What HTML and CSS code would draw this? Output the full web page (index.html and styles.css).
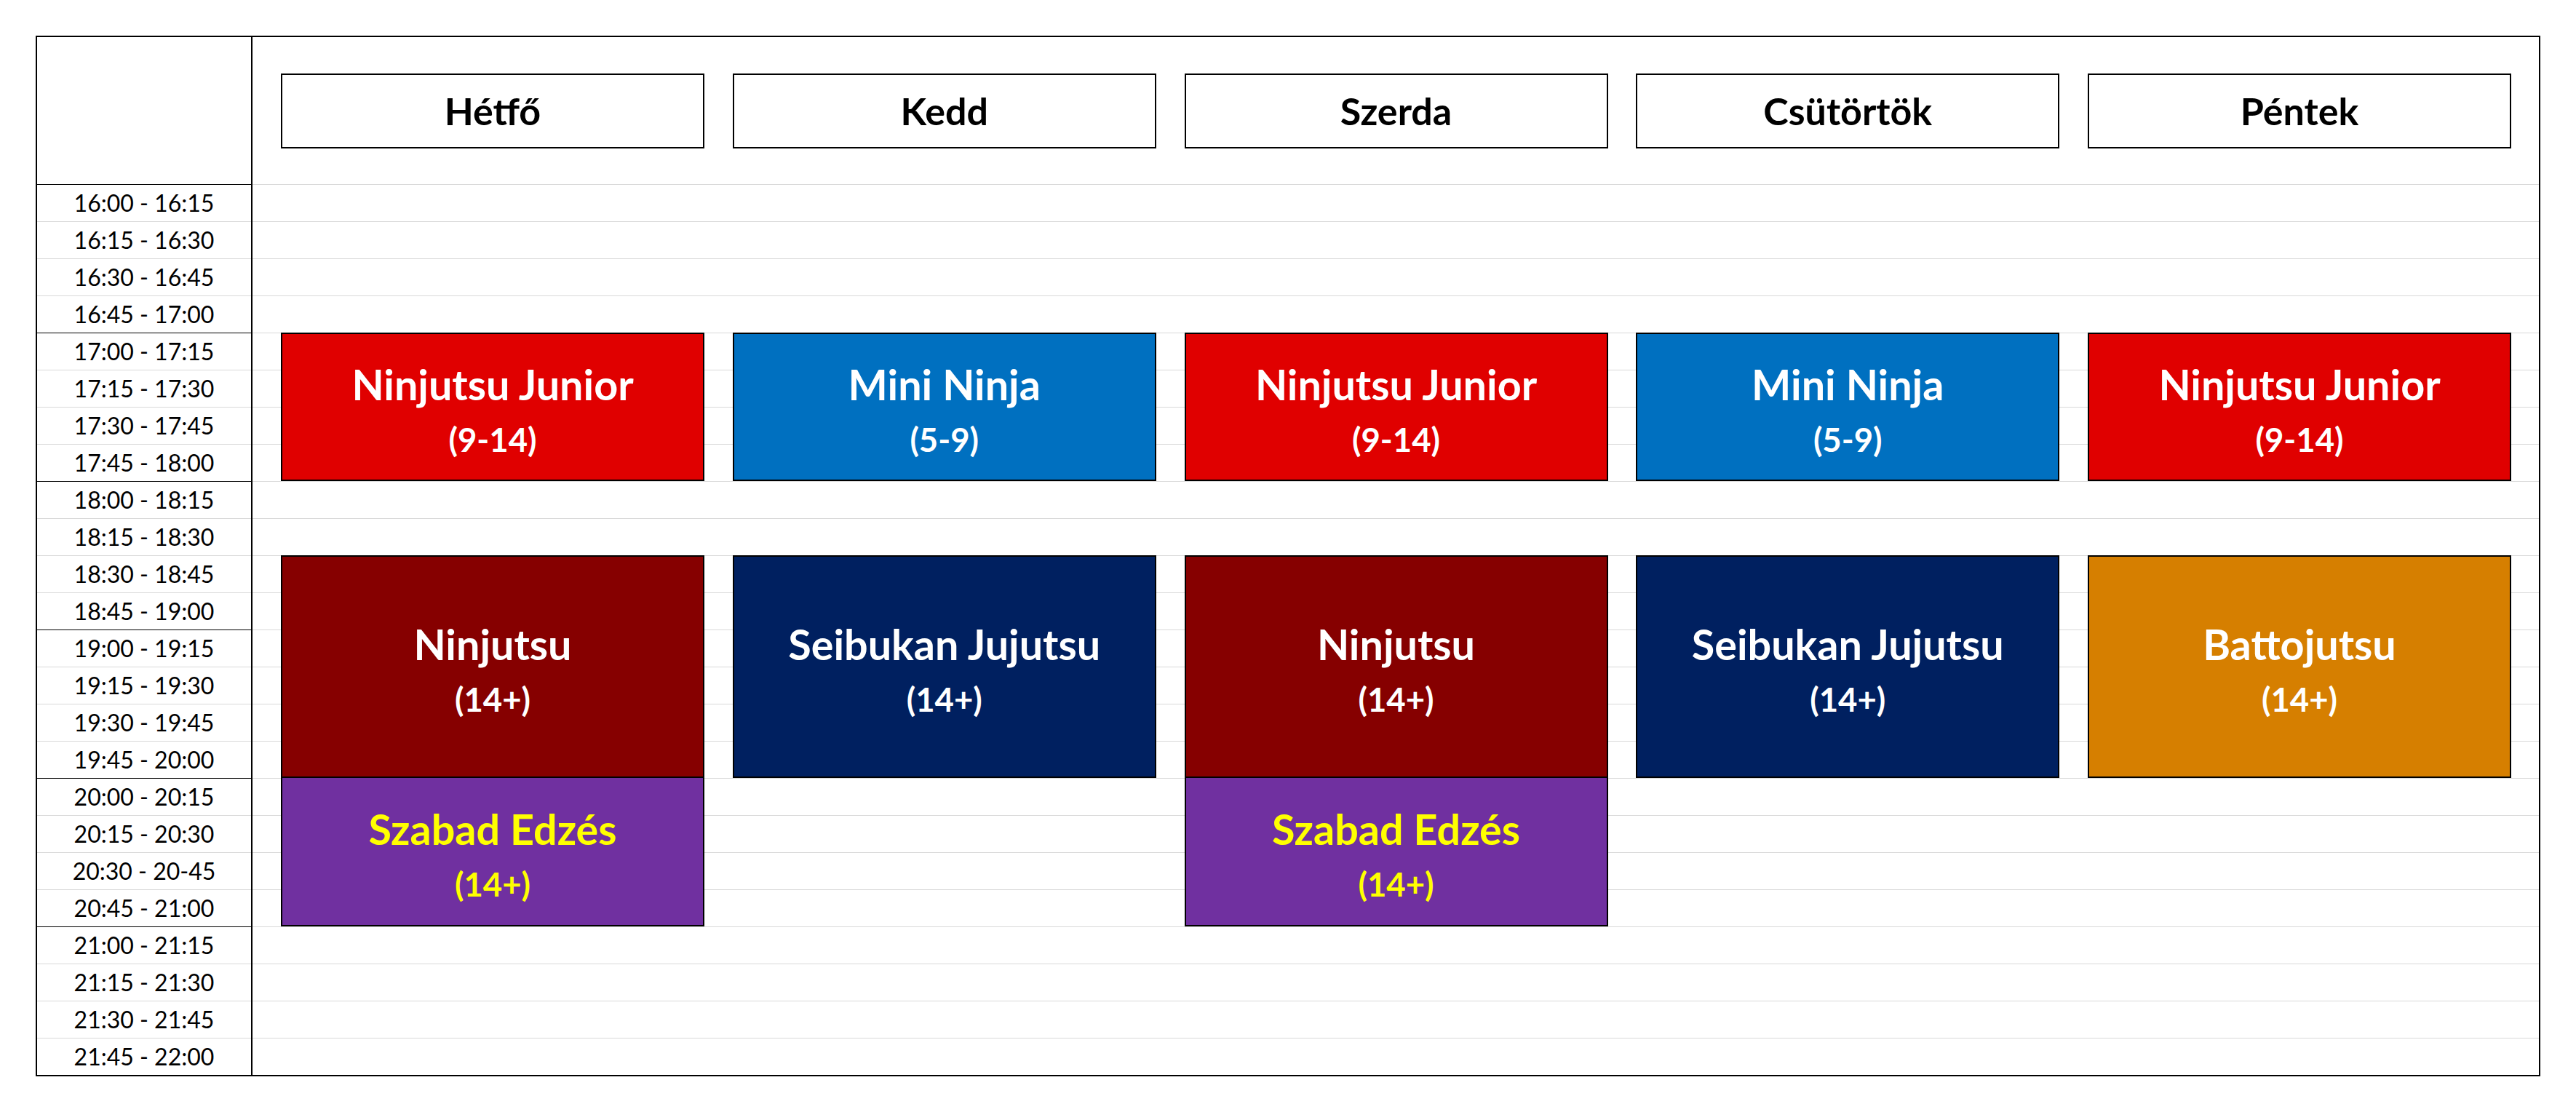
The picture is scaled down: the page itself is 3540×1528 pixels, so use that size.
FILE: index.html
```html
<!DOCTYPE html>
<html lang="hu">
<head>
<meta charset="utf-8">
<title>Órarend</title>
<link rel="stylesheet" href="styles.css">
</head>
<body>
<div class="sheet">
  <div class="times">
    <div class="time-head"></div>
    <div class="slot hour">16:00 - 16:15</div>
    <div class="slot">16:15 - 16:30</div>
    <div class="slot">16:30 - 16:45</div>
    <div class="slot">16:45 - 17:00</div>
    <div class="slot hour">17:00 - 17:15</div>
    <div class="slot">17:15 - 17:30</div>
    <div class="slot">17:30 - 17:45</div>
    <div class="slot">17:45 - 18:00</div>
    <div class="slot hour">18:00 - 18:15</div>
    <div class="slot">18:15 - 18:30</div>
    <div class="slot">18:30 - 18:45</div>
    <div class="slot">18:45 - 19:00</div>
    <div class="slot hour">19:00 - 19:15</div>
    <div class="slot">19:15 - 19:30</div>
    <div class="slot">19:30 - 19:45</div>
    <div class="slot">19:45 - 20:00</div>
    <div class="slot hour">20:00 - 20:15</div>
    <div class="slot">20:15 - 20:30</div>
    <div class="slot">20:30 - 20-45</div>
    <div class="slot">20:45 - 21:00</div>
    <div class="slot hour">21:00 - 21:15</div>
    <div class="slot">21:15 - 21:30</div>
    <div class="slot">21:30 - 21:45</div>
    <div class="slot">21:45 - 22:00</div>
  </div>

  <div class="days">
    <div class="day mon">Hétfő</div>
    <div class="day tue">Kedd</div>
    <div class="day wed">Szerda</div>
    <div class="day thu">Csütörtök</div>
    <div class="day fri">Péntek</div>

    <div class="session red mon at-1700"><span class="name">Ninjutsu Junior</span><span class="age">(9-14)</span></div>
    <div class="session blue tue at-1700"><span class="name">Mini Ninja</span><span class="age">(5-9)</span></div>
    <div class="session red wed at-1700"><span class="name">Ninjutsu Junior</span><span class="age">(9-14)</span></div>
    <div class="session blue thu at-1700"><span class="name">Mini Ninja</span><span class="age">(5-9)</span></div>
    <div class="session red fri at-1700"><span class="name">Ninjutsu Junior</span><span class="age">(9-14)</span></div>

    <div class="session maroon mon at-1830"><span class="name">Ninjutsu</span><span class="age">(14+)</span></div>
    <div class="session navy tue at-1830"><span class="name">Seibukan Jujutsu</span><span class="age">(14+)</span></div>
    <div class="session maroon wed at-1830"><span class="name">Ninjutsu</span><span class="age">(14+)</span></div>
    <div class="session navy thu at-1830"><span class="name">Seibukan Jujutsu</span><span class="age">(14+)</span></div>
    <div class="session orange fri at-1830"><span class="name">Battojutsu</span><span class="age">(14+)</span></div>

    <div class="session purple joined mon at-2000"><span class="name">Szabad Edzés</span><span class="age">(14+)</span></div>
    <div class="session purple joined wed at-2000"><span class="name">Szabad Edzés</span><span class="age">(14+)</span></div>
  </div>
</div>
</body>
</html>
```

FILE: styles.css
```css
html, body {
  margin: 0;
  padding: 0;
  background: #ffffff;
}

body {
  font-family: "Lato", "Open Sans", "Liberation Sans", sans-serif;
  color: #000;
}

.sheet {
  box-sizing: border-box;
  margin: 49px 0 0 49px;
  width: 3442px;
  border: 2px solid #000;
  display: grid;
  grid-template-columns: 296px 1fr;
}

/* time column */
.times {
  display: flex;
  flex-direction: column;
  border-right: 2px solid #000;
}

.time-head {
  height: 202px;
}

.slot {
  box-sizing: border-box;
  height: 51px;
  border-top: 1px solid #d9d9d9;
  display: flex;
  align-items: center;
  justify-content: center;
  font-size: 32px;
  font-weight: 400;
  line-height: 1.2;
  white-space: nowrap;
}

.slot.hour {
  border-top-color: #000;
}

/* day area */
.days {
  display: grid;
  grid-template-columns: repeat(5, 1fr);
  grid-template-rows: 202px repeat(24, 51px);
  column-gap: 38.75px;
  padding: 0 38px 0 39px;
  background-image: repeating-linear-gradient(to bottom, #d9d9d9 0, #d9d9d9 1px, transparent 1px, transparent 51px);
  background-position: 0 202px;
  background-size: 100% 1224px;
  background-repeat: no-repeat;
}

.mon { grid-column: 1; }
.tue { grid-column: 2; }
.wed { grid-column: 3; }
.thu { grid-column: 4; }
.fri { grid-column: 5; }

.day {
  grid-row: 1;
  align-self: center;
  box-sizing: border-box;
  height: 103px;
  border: 2px solid #000;
  background: #fff;
  display: flex;
  align-items: center;
  justify-content: center;
  padding-top: 1px;
  font-size: 52px;
  font-weight: 700;
  line-height: 1.2;
}

.at-1700 { grid-row: 6 / span 4; }
.at-1830 { grid-row: 12 / span 6; }
.at-2000 { grid-row: 18 / span 4; }

.session {
  box-sizing: border-box;
  border: 2px solid #000;
  display: flex;
  flex-direction: column;
  align-items: center;
  justify-content: center;
  padding-top: 6px;
  color: #fff;
  font-weight: 700;
  text-align: center;
}

.session.joined {
  border-top: 0;
}

.session .name {
  font-size: 57.5px;
  line-height: 1.2;
  white-space: nowrap;
}

.session .age {
  font-size: 45.5px;
  line-height: 1.2;
  margin-top: 15px;
}

.red { background: #e00000; }
.blue { background: #0070c0; }
.maroon { background: #860000; }
.navy { background: #002060; }
.orange { background: #d67f00; }
.purple { background: #7030a0; color: #ffff00; }
```
